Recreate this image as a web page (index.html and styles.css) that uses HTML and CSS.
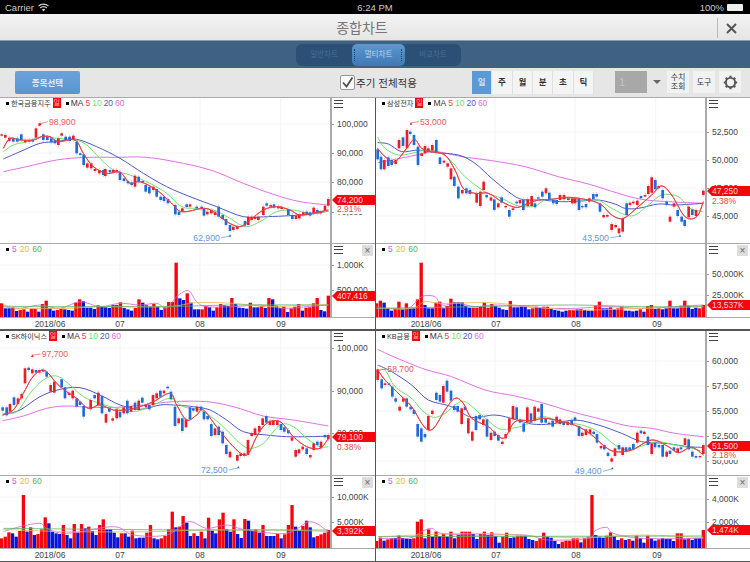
FILE: index.html
```html
<!DOCTYPE html>
<html lang="ko">
<head>
    <meta charset="UTF-8">
    <meta name="viewport" content="width=device-width, initial-scale=1.0">
    <title>종합차트</title>
    <link rel="stylesheet" href="styles.css">
</head>
<body>
    <div class="status">
        <div class="status-left">
            Carrier
            <svg width="11" height="9" viewBox="0 0 11 9"><path d="M0.5 3.2a7 7 0 0 1 10 0M2.2 5a4.6 4.6 0 0 1 6.6 0" fill="none" stroke="#ccc" stroke-width="1.2"/><path d="M3.8 6.5a2.4 2.4 0 0 1 3.4 0L5.5 8.4z" fill="#ccc"/></svg>
        </div>
        <div class="status-time">6:24 PM</div>
        <div class="status-right">
            100%
            <span class="battery"></span>
        </div>
    </div>

    <div class="titlebar">
        <div class="title">종합차트</div>
        <div class="close">
            <svg width="13" height="13" viewBox="0 0 13 13"><path d="M2 2l9 9M11 2l-9 9" stroke="#555" stroke-width="2"/></svg>
        </div>
    </div>

    <div class="navbar">
        <div class="segments">
            <div class="seg">일반차트</div>
            <div class="seg active">멀티차트</div>
            <div class="seg">비교차트</div>
        </div>
    </div>

    <div class="toolbar">
        <button class="pick">종목선택</button>
        <label class="apply">
            <span class="check">
                <svg width="13" height="13" viewBox="0 0 13 13"><path d="M2 6.5l3.5 4 6-9" fill="none" stroke="#4d4d4d" stroke-width="1.8"/></svg>
            </span>
            주기 전체적용
        </label>
        <div class="periods">
            <div class="period on">일</div>
            <div class="period">주</div>
            <div class="period">월</div>
            <div class="period">분</div>
            <div class="period">초</div>
            <div class="period">틱</div>
        </div>
        <div class="count">1</div>
        <div class="arrow"></div>
        <div class="tool two-line">수치<br>조회</div>
        <div class="tool">도구</div>
        <div class="tool gear">
            <svg width="17" height="17" viewBox="0 0 17 17"><circle cx="8.5" cy="8.5" r="4.6" fill="none" stroke="#555" stroke-width="1.9"/><path d="M8.5 1.8v2M8.5 13.2v2M1.8 8.5h2M13.2 8.5h2M3.8 3.8l1.4 1.4M11.8 11.8l1.4 1.4M3.8 13.2l1.4-1.4M11.8 5.2l1.4-1.4" stroke="#555" stroke-width="2.2"/></svg>
        </div>
    </div>

    <div class="charts" id="charts"></div>

    <script src="chart.js"></script>
</body>
</html>
```
FILE: styles.css
```css
* {
    box-sizing: border-box;
}

body {
    margin: 0;
    width: 750px;
    height: 562px;
    overflow: hidden;
    background: #555;
    font-family: "Liberation Sans", "Noto Sans CJK KR", sans-serif;
}

.status {
    display: grid;
    grid-template-columns: 1fr auto 1fr;
    align-items: center;
    height: 14px;
    padding: 0 5px;
    background: #000;
    color: #ccc;
    font-size: 9.5px;
}

.status-left {
    display: flex;
    align-items: center;
    gap: 4px;
}

.status-right {
    display: flex;
    justify-content: flex-end;
    align-items: center;
    gap: 3px;
    padding-right: 2px;
}

.battery {
    width: 16px;
    height: 7px;
    background: #eee;
    border-radius: 1px;
}

.titlebar {
    display: flex;
    justify-content: center;
    align-items: center;
    position: relative;
    height: 27px;
    padding-right: 26px;
    background: linear-gradient(#f3f3f3, #e6e6e6);
    border-bottom: 1px solid #8d9aa6;
}

.title {
    color: #777;
    font-size: 14px;
}

.close {
    position: absolute;
    right: 0;
    top: 4px;
    display: flex;
    justify-content: center;
    align-items: center;
    width: 33px;
    height: 20px;
    padding-right: 5px;
    border-left: 1px solid #bbb;
}

.navbar {
    display: flex;
    justify-content: center;
    align-items: center;
    height: 27px;
    padding-left: 7px;
    background: #3f6183;
}

.segments {
    display: flex;
    width: 165px;
    height: 22px;
    background: #2c4f76;
    border-radius: 6px;
}

.seg {
    flex: 1;
    text-align: center;
    line-height: 22px;
    color: #456f97;
    font-size: 7.5px;
}

.seg.active {
    flex: 0 0 53px;
    position: relative;
    background: linear-gradient(#5d98d0, #3f78b2);
    border-radius: 5px;
    color: #b4d6f2;
}

.seg.active::before,
.seg.active::after {
    content: "";
    position: absolute;
    top: 5px;
    bottom: 5px;
    width: 1px;
    border-left: 1px dotted #1f4a78;
}

.seg.active::before {
    left: 2px;
}

.seg.active::after {
    right: 2px;
}

.toolbar {
    display: flex;
    align-items: center;
    height: 30px;
    padding: 0 0 1px 15px;
    background: #e6e6e6;
    border-bottom: 1px solid #a9a9a9;
}

.pick {
    width: 65px;
    height: 23px;
    padding: 0;
    border: 0;
    border-radius: 2px;
    background: linear-gradient(#6aa3dc, #5a94ce);
    color: #dceafa;
    font-family: inherit;
    font-size: 8.5px;
    font-weight: bold;
}

.apply {
    display: flex;
    align-items: center;
    width: 78px;
    margin-left: 260px;
    color: #333;
    font-size: 10.5px;
    white-space: nowrap;
}

.check {
    display: flex;
    justify-content: center;
    align-items: center;
    width: 15px;
    height: 15px;
    margin-right: 1px;
    background: #fafafa;
    border: 1px solid #999;
    border-radius: 2px;
}

.periods {
    display: flex;
    width: 122px;
    height: 23px;
    margin-left: 54px;
}

.period {
    flex: 1;
    text-align: center;
    line-height: 22px;
    background: #f4f4f4;
    border-right: 1px solid #e0e0e0;
    color: #333;
    font-size: 8.5px;
    font-weight: bold;
}

.period.on {
    background: #5c9ad6;
    color: #cfe3f7;
}

.count {
    width: 32px;
    height: 22px;
    margin-left: 21px;
    padding-left: 4px;
    background: #a8a8a8;
    color: #c4c4c4;
    font-size: 11px;
    line-height: 22px;
}

.arrow {
    width: 0;
    height: 0;
    margin: 0 6px;
    border-left: 4px solid transparent;
    border-right: 4px solid transparent;
    border-top: 4px solid #666;
}

.tool {
    display: flex;
    justify-content: center;
    align-items: center;
    width: 22px;
    height: 22px;
    margin-right: 4px;
    background: #f2f2f2;
    color: #333;
    font-size: 8px;
    text-align: center;
    line-height: 9px;
}

.charts {
    display: grid;
    grid-template-columns: 375px 374px;
    grid-template-rows: 231px 230px;
    gap: 2px 1px;
}

.pane {
    display: flex;
    flex-direction: column;
    overflow: hidden;
    background: #fff;
}

.pane-row {
    display: flex;
    flex: none;
    border-bottom: 1px solid #aaa;
}

.plot {
    position: relative;
    flex: none;
}

.plot svg {
    display: block;
}

.yaxis {
    position: relative;
    flex: 1;
    border-left: 2px solid #aaa;
}

.xaxis {
    position: relative;
    flex: 1;
}

.xlabel {
    position: absolute;
    top: 1px;
    transform: translateX(-50%);
    color: #444;
    font-size: 8.5px;
}

.ylabel {
    position: absolute;
    left: 5px;
    transform: translateY(-50%);
    color: #444;
    font-size: 8.5px;
    white-space: nowrap;
}

.ylabel::before {
    content: "";
    position: absolute;
    left: -5px;
    top: 50%;
    width: 2px;
    height: 1px;
    background: #999;
}

.tag {
    position: absolute;
    left: 0;
    right: 0;
    height: 10px;
    padding-left: 5px;
    transform: translateY(-50%);
    background: #f3060c;
    clip-path: polygon(0 50%, 5px 0, 100% 0, 100% 100%, 5px 100%);
    color: #ffd5d5;
    font-size: 8.5px;
    line-height: 10px;
}

.pct {
    position: absolute;
    left: 2px;
    right: 0;
    padding-left: 3px;
    transform: translateY(-50%);
    background: #fff;
    color: #e8474a;
    font-size: 8.5px;
    line-height: 10px;
}

.legend {
    position: absolute;
    left: 6px;
    top: 0;
    display: flex;
    align-items: center;
    gap: 2px;
    height: 10px;
    color: #333;
    font-size: 8.5px;
    white-space: nowrap;
}

.legend .dot {
    width: 3px;
    height: 3px;
    margin-right: 0;
    background: #000;
}

.legend .name {
    font-size: 7.2px;
}

.legend .badge {
    width: 8px;
    height: 10px;
    background: #f3060c;
    color: #ffb9b9;
    font-size: 7px;
    line-height: 10px;
    text-align: center;
}

.legend .gap {
    margin-left: 3px;
}

.legend.vol {
    gap: 3px;
}

.t5 { color: #e8474a; }
.t10 { color: #6fe06d; }
.t20 { color: #4d58c8; }
.t60 { color: #e46fe8; }
.v5 { color: #d65fd8; }
.v20 { color: #f0b44a; }
.v60 { color: #58b06a; }

.burger {
    position: absolute;
    left: 2px;
    top: 2px;
    width: 9px;
    height: 8px;
    border-top: 1px solid #444;
    border-bottom: 1px solid #444;
}

.burger::after {
    content: "";
    position: absolute;
    left: 0;
    right: 0;
    top: 2px;
    height: 1px;
    background: #444;
}

.shut {
    position: absolute;
    right: 2px;
    top: 1px;
    width: 11px;
    height: 11px;
    background: #ddd;
    color: #666;
    font-size: 10px;
    line-height: 11px;
    text-align: center;
}

/* chart drawing */
.grid { stroke: #eeeeee; stroke-width: 2; }
.line { fill: none; stroke-width: 3; stroke-linejoin: round; }
.thin { fill: none; stroke-width: 2.4; }
.ma5 { stroke: #e8474a; }
.ma10 { stroke: #6fe06d; }
.ma20 { stroke: #4d58c8; }
.ma60 { stroke: #e46fe8; }
.vma5 { stroke: #d65fd8; }
.vma20 { stroke: #f0b44a; }
.vma60 { stroke: #58b06a; }
.wick-r { stroke: #f0a8aa; stroke-width: 2; }
.wick-b { stroke: #a6c4f0; stroke-width: 2; }
.body-r { fill: #e81f28; }
.body-b { fill: #1f6bd8; }
.bar-r { fill: #f4060e; }
.bar-b { fill: #0a14d8; }
.hi { fill: #e8595b; font-size: 26px; }
.lo { fill: #5b93e0; font-size: 26px; }
.hi-line { stroke: #e8595b; stroke-width: 2; }
.lo-line { stroke: #5b93e0; stroke-width: 2; }
```
FILE: chart.js
```js
// Everything below is traced at 3x, so one pixel on screen is 3 units in the svgs.
const VGRID = [150, 360, 600, 842];

const CHARTS = [
    {
        name: '한국금융지주', ox: 0, oy: 9, voy: 12, top: 98, vtop: 244,
        price: '74,200', priceY: 200, pct: '2.91%', pctY: 209,
        volume: '407,416', volumeY: 296,
        ticks: [['100,000', 124], ['90,000', 153], ['80,000', 182], ['70,000', 212]],
        vticks: [['1,000K', 265], ['500,000', 290]],
        hi: { text: '98,900', x: 147, y: 80, px: 118, py: 88 },
        lo: { text: '62,900', x: 580, y: 428, px: 690, py: 422 },
        candles: '5r118-122 16r120-128 28r128-138 40b130-140 52b130-140 64b118-135 76r135-142 88r135-140 98b135-140 108r100-128 120r85-90 130b118-135 142b125-135 154b130-142 165b135-145 175r130-150 185r115-122 197b125-135 209b125-138 220r122-135 230b140-175 241b175-180 251b178-210 262r205-218 274r205-220 285r222-228 298r225-235 310b225-240 316r222-243 330b225-232 340r225-232 350r225-230 360b230-255 372b250-258 384b258-265 395b262-270 405r242-275 416b245-262 428b258-263 437b270-290 448b275-295 460r275-285 470b282-305 482b305-315 492b305-318 504b312-325 526b330-358 537b350-360 547r340-350 560b328-336 570r328-335 590b335-340 605b335-342 612b340-362 622r350-358 634r345-355 645r350-360 656b335-365 668b360-372 678b372-390 690b390-408 700r395-405 712r395-402 735b378-392 745r365-390 755r365-375 765r365-372 775r365-375 790r335-360 800b325-332 812r330-335 822b328-338 835r335-340 845r335-342 865b342-360 877b360-372 888r362-372 898r358-370 910r352-360 920b350-358 930b352-362 941r338-355 952b345-355 962r350-355 975r332-348 985r312-332',
        ma: [
            [10,160,30,130,60,135,100,135,125,125,150,125,175,140,225,135,250,175,280,215,320,235,360,232,390,265,420,260,470,285,510,320,545,350,610,340,640,350,680,380,720,395,750,375,790,345,830,335,870,345,900,360,950,352,985,345],
            [10,170,40,150,80,140,125,125,170,130,225,135,260,150,300,190,340,225,390,240,450,265,500,295,545,335,590,340,640,345,690,370,735,395,780,380,830,350,880,345,930,355,985,348],
            [10,192,60,170,120,145,170,140,225,132,290,155,360,190,430,235,500,275,570,305,650,335,730,365,800,365,870,362,930,358,985,348],
            [10,230,80,215,170,195,260,187,350,187,440,187,550,205,640,228,730,265,820,298,900,320,985,330]
        ],
        bars: 'r190 b205 b205 r202 b213 r210 r208 b215 r206 r206 b215 r192 r182 b205 b212 r210 r206 b208 b210 b212 r188 r178 b184 b203 b203 b207 r196 b198 b202 b204 r195 r195 r187 b204 b208 b212 r204 r178 b188 b196 b200 r192 b200 b210 r202 r186 r186 r68 b175 b180 r160 b188 b208 b208 r208 r198 b202 b212 r202 r192 b196 b198 r174 b192 b203 b204 b206 r188 b202 b202 r198 b204 r174 b178 b197 b204 r200 b216 r205 r200 r192 b212 r203 r202 r190 r174 b210 b214 r167',
        vma: [
            [10,200,60,205,120,195,180,205,240,185,300,200,360,190,420,195,470,190,500,205,530,170,565,152,590,185,620,200,700,200,780,195,850,205,920,200,985,195],
            [10,195,60,205,200,205,300,200,500,200,590,188,700,190,800,200,930,195,985,195],
            [10,198,100,200,300,200,500,200,700,195,985,195]
        ]
    },
    {
        name: '삼성전자', ox: 3, oy: -66, voy: 12, top: 98, vtop: 244,
        price: '47,250', priceY: 191, pct: '2.38%', pctY: 201,
        volume: '13,537K', volumeY: 305,
        ticks: [['52,500', 132], ['50,000', 160], ['47,500', 188], ['45,000', 216]],
        vticks: [['50,000K', 274], ['25,000K', 295]],
        hi: { text: '53,000', x: 135, y: 5, px: 108, py: 10 },
        lo: { text: '43,500', x: 622, y: 353, px: 735, py: 347 },
        candles: '8b88-118 18b110-148 28r120-148 40b112-138 50b120-135 62r120-132 72r60-85 84b52-78 96r30-85 106b35-42 117b45-75 129b80-135 140r100-108 150r78-100 160r85-95 172r75-92 184b60-98 195b112-132 207r122-128 218r130-140 228r145-178 238b170-198 250b200-235 262r210-220 274b205-220 285b210-222 305r220-248 316r215-258 326r185-210 335b225-232 348r232-242 358b238-270 370r250-262 380b232-248 392r258-262 403b270-290 414r265-270 425b245-250 435r240-250 445b240-270 458r238-258 470r228-258 480b250-262 490b232-236 502b215-230 513r205-220 523b218-240 535b240-250 545b240-252 555r225-240 567r225-238 580r235-240 592r235-250 600r235-250 612b235-270 622b258-262 633b252-262 643r235-245 655b222-238 665b222-230 675b250-275 686r285-292 697r285-290 710r312-330 722r315-322 732r325-340 743r295-335 755b250-285 765r248-255 775r245-250 787r242-255 798b228-235 810r225-230 820r198-222 830r172-218 841b180-208 851r198-205 863b210-235 875b245-255 885r290-305 897r250-260 908b270-288 920b290-305 929b300-318 941r260-292 952b268-285 963r270-288 985r212-225',
        ma: [
            [8,85,30,110,60,125,95,85,118,58,140,85,170,95,210,105,240,150,265,205,300,220,340,220,380,245,420,262,450,255,490,240,530,238,580,232,640,240,680,255,710,285,745,295,790,260,830,225,860,198,890,225,930,290,965,290,985,245],
            [8,52,30,85,70,105,110,100,150,90,190,95,230,125,270,170,330,215,380,235,430,258,480,258,510,240,560,235,620,240,670,240,710,265,770,288,820,255,860,225,910,230,945,265,985,275],
            [8,68,40,72,80,95,130,90,180,98,250,105,300,130,350,175,400,215,440,238,500,240,560,245,620,243,670,240,720,252,750,265,790,265,850,252,900,255,985,250],
            [8,128,50,120,110,108,180,95,260,110,350,122,450,140,550,170,640,192,730,220,800,238,880,245,985,250]
        ],
        bars: 'r190 r182 b188 b205 b212 r205 r185 b208 r190 b205 b205 r178 r68 b195 b205 b205 r188 r185 b205 r198 r176 b187 b187 b187 b197 b203 r203 r203 r200 r188 r203 r192 b198 b203 b208 b210 r183 b202 b202 b200 b200 b208 r205 r200 b203 r200 r200 b207 b210 b212 b215 b212 r210 r210 b208 r207 b210 b212 b212 r197 r185 b205 b205 r202 b208 r205 r200 b212 b212 b214 b212 r208 b215 r198 r195 b207 r205 b208 b205 r182 b205 b205 r197 r182 b197 b207 b203 r205 r195',
        vma: [
            [5,200,40,205,100,205,140,170,180,170,200,195,250,190,300,200,360,195,450,200,520,205,600,205,700,200,800,205,900,200,985,195],
            [5,205,110,205,150,185,200,190,340,188,450,198,600,210,800,205,985,200],
            [5,205,300,200,580,195,800,200,985,200]
        ]
    },
    {
        name: 'SK하이닉스', ox: 0, oy: 3, voy: 18, top: 331, vtop: 476,
        price: '79,100', priceY: 437, pct: '0.38%', pctY: 447,
        volume: '3,392K', volumeY: 531,
        ticks: [['100,000', 348], ['90,000', 391], ['80,000', 433]],
        vticks: [['10,000K', 497], ['5,000K', 522]],
        hi: { text: '97,700', x: 125, y: 72, px: 97, py: 77 },
        lo: { text: '72,500', x: 603, y: 420, px: 715, py: 412 },
        candles: '8b232-242 20b232-256 30r222-245 42b202-225 54r205-222 65r192-205 75r115-160 86b113-120 97r118-130 108b120-128 118r120-128 130b120-125 140b125-140 152r165-185 163r155-188 185b148-172 195b172-205 207r188-195 218r182-205 230b205-230 240b215-225 251b228-260 272r210-238 284b195-205 295r188-225 306b198-250 318r252-278 328b235-245 338r265-272 350r238-265 360b245-262 371r232-250 382b212-250 393r228-245 405b218-240 416r212-240 427b203-218 438r225-232 448b225-238 459r195-225 470r190-205 481b182-200 492r182-190 503b170-175 513b185-208 525b230-288 536r265-280 547b265-303 558r268-292 570b232-268 580b235-242 591r230-245 603b230-240 612b245-268 623b258-268 634b282-318 645r295-315 656b290-315 668b305-340 679b345-372 690r365-382 712r375-392 722r370-378 733r370-378 744r330-375 755r310-318 765r295-315 778r288-305 788r265-285 799b258-278 810r272-285 820r272-285 832r272-285 843b282-300 853b292-305 865b300-310 876r322-332 887r360-380 897r358-370 908r350-358 920b355-372 931r375-382 941r340-360 952b335-345 963r335-355 975b315-322 985r315-328',
        ma: [
            [8,255,40,240,70,190,95,145,120,122,140,125,170,160,200,185,230,205,265,235,300,225,340,240,380,240,420,230,460,215,510,190,530,225,560,270,590,255,610,240,650,290,700,350,740,375,770,320,800,280,840,275,880,320,920,350,960,355,985,325],
            [8,250,50,245,90,190,130,150,170,138,210,165,250,200,300,220,350,235,400,245,450,230,510,205,550,230,600,240,640,265,680,300,720,340,750,355,790,340,840,285,880,290,920,325,960,350,985,350],
            [8,255,60,240,120,200,180,178,240,173,300,195,360,225,420,238,480,225,520,225,580,230,630,240,680,270,730,305,800,315,860,320,930,320,985,318],
            [8,272,70,258,140,235,200,228,270,232,350,232,430,225,520,215,620,215,700,230,790,258,880,270,985,288]
        ],
        bars: 'r205 r200 r187 b190 b200 r183 r75 b185 r172 b195 r192 r178 r142 b160 b185 b190 b192 r165 b195 b205 r162 b188 r162 b175 r170 b183 b195 r165 r148 b178 b178 b188 b202 r190 b190 b200 r182 b205 b203 b203 r188 r165 b205 b208 r205 r198 r178 r125 b172 r170 r138 b158 b198 r190 b198 r185 b205 r143 b182 b190 r148 r128 b178 b185 r148 b192 b204 r147 b152 b183 r178 b188 r165 b198 b198 b198 r192 b205 r193 r165 r105 b170 b182 r168 r152 b172 b202 r198 r193 r188 r180',
        vma: [
            [10,185,60,170,120,160,140,175,200,190,340,170,400,195,500,195,565,155,620,175,680,165,740,180,860,190,930,155,985,185],
            [10,178,200,185,450,185,620,180,850,180,985,185],
            [10,175,300,178,600,180,985,180]
        ]
    },
    {
        name: 'KB금융', ox: 3, oy: 3, voy: 18, top: 331, vtop: 476,
        price: '51,500', priceY: 446, pct: '2.18%', pctY: 455,
        volume: '1,474K', volumeY: 530,
        ticks: [['60,000', 361], ['57,500', 386], ['55,000', 411], ['52,500', 436], ['50,000', 461]],
        vticks: [['4,000K', 499], ['2,000K', 522]],
        hi: { text: '58,700', x: 37, y: 118, px: 8, py: 122 },
        lo: { text: '49,400', x: 600, y: 424, px: 712, py: 415 },
        candles: '8r118-150 20b148-175 30r160-165 42b160-165 52b170-200 62b205-215 74r230-242 85r205-215 95b205-230 107b230-238 117b240-252 128b282-320 139b295-335 150b312-322 160r258-300 172r242-252 184b188-210 195b195-215 205r168-218 216b152-185 228b182-212 238b228-240 248b228-245 260r235-282 270b230-240 280r265-310 292r305-332 303b258-300 314b255-268 325r268-285 336b268-320 348r308-330 359b305-318 370b315-332 382r335-342 392r312-325 403r265-305 414r228-268 425b232-268 435b268-278 446b280-305 457r232-278 468b250-278 479r230-272 490r235-245 500b222-278 512b265-278 522r278-282 533b272-290 545r260-278 555r268-282 566b275-285 578r275-285 590b270-285 600b262-272 612b288-318 622r308-318 633r298-315 645r298-312 656b305-312 666b312-338 678r348-355 688b345-358 699b368-378 710r385-395 720r355-378 732b345-358 743r352-375 753b352-365 764b352-362 775b342-358 787r308-338 798b302-310 808r305-312 819b320-345 830r340-372 840b338-352 852b345-352 863b345-380 875r365-380 885b362-372 897b352-362 908r355-368 918b352-358 930r325-345 941b328-358 952b365-380 963b378-383 975r378-382 985r345-372',
        ma: [
            [8,120,30,150,70,190,110,230,140,280,160,300,180,290,210,240,240,205,265,220,290,265,340,290,385,325,420,275,470,272,510,265,560,275,610,290,650,315,690,350,720,365,770,360,830,330,880,350,910,368,950,352,985,375],
            [8,125,30,120,60,170,110,205,140,240,175,262,210,250,240,225,270,215,320,255,370,295,410,295,450,285,500,260,560,275,620,285,670,305,720,345,760,360,810,345,850,335,900,345,950,355,985,365],
            [8,105,50,125,110,165,160,210,230,230,290,262,360,255,420,268,470,282,530,282,600,270,670,285,740,310,800,335,870,340,940,350,985,352],
            [8,58,60,82,150,118,230,140,330,180,420,198,500,218,590,245,680,268,760,288,830,295,900,310,985,320]
        ],
        bars: 'r213 r203 b212 r208 r205 b204 r196 b204 b206 b207 r205 r155 r148 b205 r178 b200 r185 b198 r192 b200 r185 b205 r195 r185 r185 r185 b192 b207 r192 r185 b195 r187 b198 b218 r200 r188 b204 b202 r197 r197 b197 b207 b210 r213 r205 r188 b200 b203 b213 b222 r215 r212 r212 r205 r205 b217 r205 r200 r75 b195 b200 b203 r197 r187 b198 b210 r205 b210 r207 b212 r197 b205 b218 r197 b205 b212 r208 b205 b207 b207 b213 r190 r190 b208 r205 b210 b205 b205 r180',
        vma: [
            [10,205,100,205,140,185,170,175,200,190,300,195,450,195,520,210,640,205,660,182,695,172,715,190,800,205,985,205],
            [10,200,300,190,500,200,650,203,800,195,985,203],
            [10,200,985,198]
        ]
    }
];

function curve(p) {
    // catmull-rom through the traced points
    let d = `M${p[0]} ${p[1]}`;
    for (let i = 0; i < p.length - 2; i += 2) {
        const x0 = p[i - 2] ?? p[i], y0 = p[i - 1] ?? p[i + 1];
        const x1 = p[i], y1 = p[i + 1];
        const x2 = p[i + 2], y2 = p[i + 3];
        const x3 = p[i + 4] ?? x2, y3 = p[i + 5] ?? y2;
        const c1x = (x1 + (x2 - x0) / 6).toFixed(1), c1y = (y1 + (y2 - y0) / 6).toFixed(1);
        const c2x = (x2 - (x3 - x1) / 6).toFixed(1), c2y = (y2 - (y3 - y1) / 6).toFixed(1);
        d += `C${c1x} ${c1y} ${c2x} ${c2y} ${x2} ${y2}`;
    }
    return d;
}

function candles(text) {
    return text.split(' ').map((token) => {
        const [, x, c, top, bottom] = token.match(/(\d+)([rb])(\d+)-(\d+)/);
        const t = +top, b = +bottom;
        return `<line class="wick-${c}" x1="${x}" x2="${x}" y1="${t - 6}" y2="${b + 6}"/>` +
            `<rect class="body-${c}" x="${x - 4}" y="${t}" width="8" height="${b - t}"/>`;
    }).join('');
}

function bars(text, base) {
    const list = text.split(' ');
    const dx = 980 / (list.length - 1);
    return list.map((token, i) => {
        const c = token[0], top = +token.slice(1);
        const x = (5 + i * dx - 5).toFixed(1);
        return `<rect class="bar-${c}" x="${x}" y="${top}" width="10" height="${base - top}"/>`;
    }).join('');
}

function gridLines(ys, oy, h) {
    const v = VGRID.map((x) => `<line class="grid" x1="${x}" x2="${x}" y1="${oy}" y2="${oy + h}"/>`);
    const horiz = ys.map((y) => `<line class="grid" x1="0" x2="1000" y1="${y}" y2="${y}"/>`);
    return v.concat(horiz).join('');
}

function highLow(mark) {
    const { hi, lo } = mark;
    const hiStart = hi.x - 3;
    return `<path class="body-r" d="M${hi.px - 4} ${hi.py + 4}L${hi.px} ${hi.py - 4}L${hi.px + 4} ${hi.py + 4}z"/>` +
        `<line class="hi-line" x1="${hi.px + 2}" y1="${hi.py - 2}" x2="${hiStart}" y2="${hi.y}"/>` +
        `<text class="hi" x="${hi.x}" y="${hi.y + 9}">${hi.text}</text>` +
        `<path class="body-b" d="M${lo.px - 4} ${lo.py + 3}L${lo.px} ${lo.py - 4}L${lo.px + 4} ${lo.py + 3}z"/>` +
        `<line class="lo-line" x1="${lo.x + 84}" y1="${lo.y}" x2="${lo.px - 2}" y2="${lo.py + 2}"/>` +
        `<text class="lo" x="${lo.x}" y="${lo.y + 9}">${lo.text}</text>`;
}

function yLabels(ticks, top) {
    return ticks.map(([text, y]) => `<div class="ylabel" style="top:${y - top}px">${text}</div>`).join('');
}

function renderPane(chart) {
    const plotW = chart.ox ? 329 : 330;
    const mainH = chart.top === 98 ? 145 : 144;
    const volH = chart.top === 98 ? 73 : 72;
    const zoomBase = chart.voy + volH * 3;
    const zy = (y) => chart.oy + (y - chart.top) * 3;
    const vy = (y) => chart.voy + (y - chart.vtop) * 3;
    const maClass = ['ma5', 'ma10', 'ma20', 'ma60'];
    const vmaClass = ['vma5', 'vma20', 'vma60'];

    const main = `<svg width="${plotW}" height="${mainH}" viewBox="${chart.ox} ${chart.oy} ${plotW * 3} ${mainH * 3}" font-family="Liberation Sans">` +
        gridLines(chart.ticks.map(([, y]) => zy(y)), chart.oy, mainH * 3) +
        chart.ma.slice().reverse().map((p, i) => `<path class="line ${maClass[3 - i]}" d="${curve(p)}"/>`).join('') +
        candles(chart.candles) +
        chart.ma.slice(0, 1).map((p) => `<path class="line ma5" d="${curve(p)}"/>`).join('') +
        highLow(chart) + '</svg>';

    const vol = `<svg width="${plotW}" height="${volH}" viewBox="${chart.ox} ${chart.voy} ${plotW * 3} ${volH * 3}">` +
        gridLines(chart.vticks.map(([, y]) => vy(y)), chart.voy, volH * 3) +
        bars(chart.bars, zoomBase) +
        chart.vma.map((p, i) => `<path class="thin ${vmaClass[i]}" d="${curve(p)}"/>`).join('') + '</svg>';

    return `<div class="pane">
        <div class="pane-row">
            <div class="plot" style="width:${plotW}px;height:${mainH}px">${main}
                <div class="legend"><span class="dot"></span><span class="name">${chart.name}</span><span class="badge">일</span><span class="dot gap"></span>MA <span class="t5">5</span><span class="t10">10</span><span class="t20">20</span><span class="t60">60</span></div>
            </div>
            <div class="yaxis">
                <div class="burger"></div>
                ${yLabels(chart.ticks, chart.top)}
                <div class="pct" style="top:${chart.pctY - chart.top}px">${chart.pct}</div>
                <div class="tag" style="top:${chart.priceY - chart.top}px">${chart.price}</div>
            </div>
        </div>
        <div class="pane-row">
            <div class="plot" style="width:${plotW}px;height:${volH}px">${vol}
                <div class="legend vol"><span class="dot"></span><span class="v5">5</span><span class="v20">20</span><span class="v60">60</span></div>
            </div>
            <div class="yaxis">
                <div class="burger"></div>
                <div class="shut">×</div>
                ${yLabels(chart.vticks, chart.vtop)}
                <div class="tag" style="top:${chart.volumeY - chart.vtop}px">${chart.volume}</div>
            </div>
        </div>
        <div class="xaxis">
            <div class="xlabel" style="left:50px">2018/06</div>
            <div class="xlabel" style="left:120px">07</div>
            <div class="xlabel" style="left:200px">08</div>
            <div class="xlabel" style="left:281px">09</div>
        </div>
    </div>`;
}

document.getElementById('charts').innerHTML = CHARTS.map(renderPane).join('');
```
